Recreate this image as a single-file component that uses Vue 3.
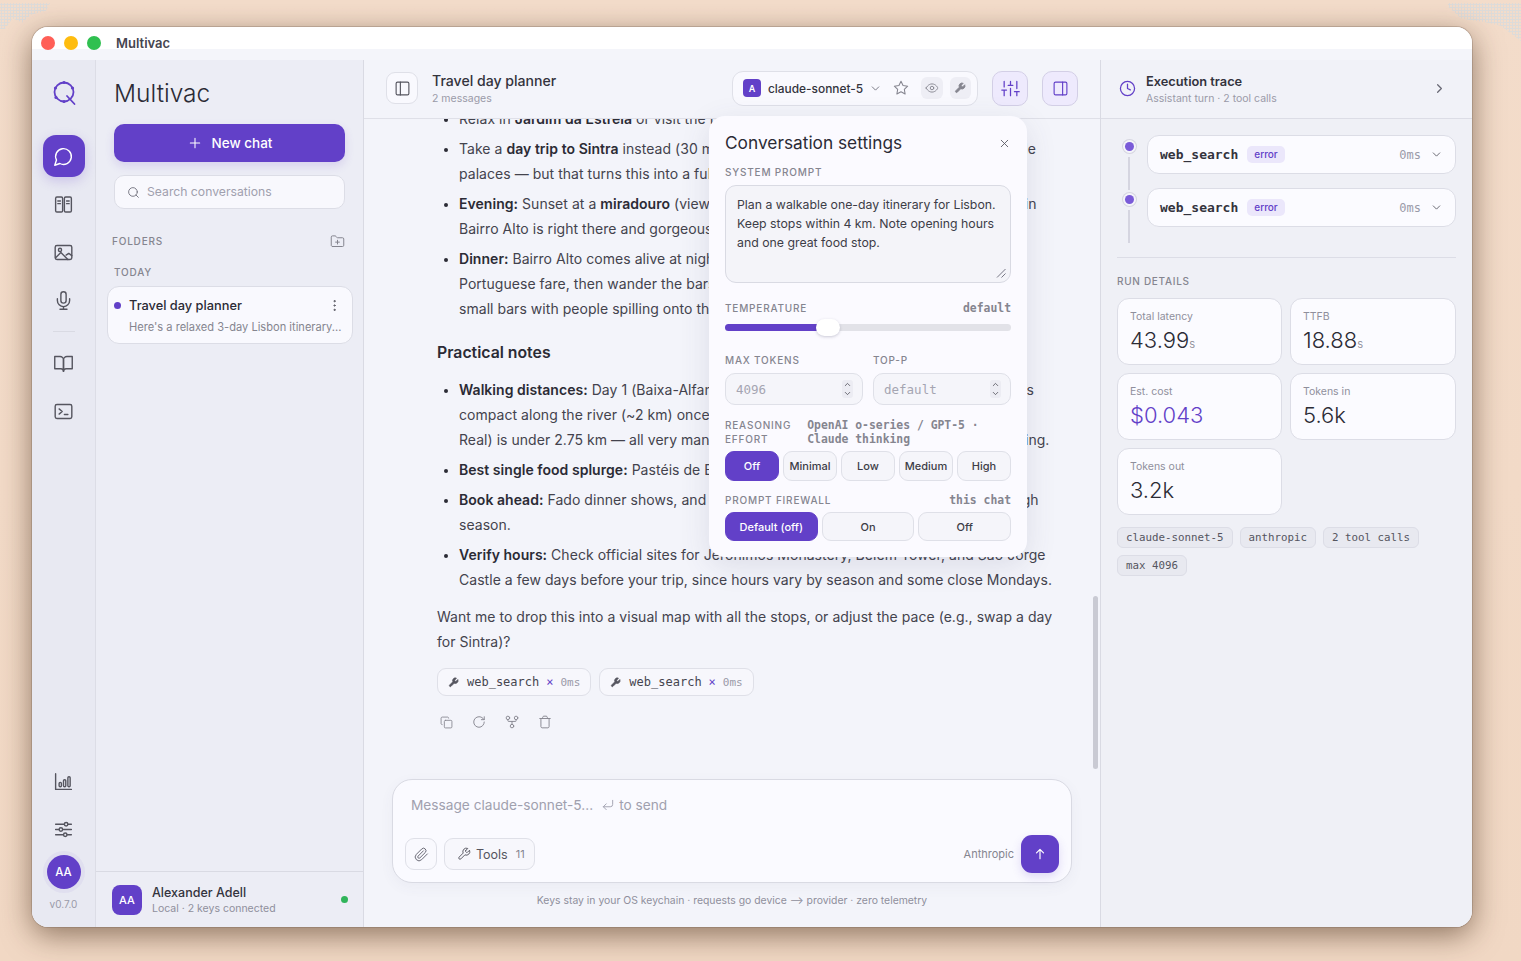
<template>
  <div class="stage">
    <span class="dots dots-left"></span>
    <span class="dots dots-right"></span>

    <div class="window">
      <div class="titlebar">
        <i class="light red"></i><i class="light yellow"></i><i class="light green"></i>
        <span class="app-name">Multivac</span>
      </div>

      <div class="body">
        <!-- icon rail -->
        <nav class="rail">
          <svg class="logo" viewBox="0 0 30 30" width="30" height="30" fill="none" stroke="#6240c8" stroke-width="1.8" stroke-linecap="round">
            <circle cx="15" cy="14" r="9.5" />
            <path d="M18 18l7.5 8" />
            <circle cx="15" cy="4.5" r="1.6" fill="#6240c8" stroke="none" />
            <circle cx="6.5" cy="10" r="1.6" fill="#6240c8" stroke="none" />
            <circle cx="7" cy="19.5" r="1.6" fill="#6240c8" stroke="none" />
            <circle cx="15" cy="23.5" r="1.6" fill="#6240c8" stroke="none" />
            <circle cx="23.5" cy="10" r="1.6" fill="#6240c8" stroke="none" />
          </svg>
          <button class="rail-btn active"><Icon name="chat" :size="21" /></button>
          <button class="rail-btn"><Icon name="books" :size="21" /></button>
          <button class="rail-btn"><Icon name="image" :size="21" /></button>
          <button class="rail-btn"><Icon name="mic" :size="21" /></button>
          <div class="rail-sep"></div>
          <button class="rail-btn"><Icon name="book" :size="21" /></button>
          <button class="rail-btn"><Icon name="terminal" :size="21" /></button>
          <button class="rail-btn push"><Icon name="chart" :size="21" /></button>
          <button class="rail-btn"><Icon name="sliders" :size="21" /></button>
          <div class="rail-avatar">AA</div>
          <div class="version">v0.7.0</div>
        </nav>

        <!-- conversations -->
        <aside class="sidebar">
          <div class="side-top">
            <h1 class="brand">Multivac</h1>
            <button class="new-chat"><Icon name="plus" :size="16" />New chat</button>
            <div class="search"><Icon name="search" :size="13" /><span>Search conversations</span></div>
            <div class="folders"><span>FOLDERS</span><Icon name="folderPlus" :size="15" /></div>
            <div class="today">TODAY</div>
            <div class="conv">
              <div class="conv-title">
                <i class="conv-dot"></i>
                <span>Travel day planner</span>
                <Icon name="more" :size="15" />
              </div>
              <div class="conv-sub">Here's a relaxed 3-day Lisbon itinerary...</div>
            </div>
          </div>
          <div class="user">
            <div class="user-avatar">AA</div>
            <div class="user-text">
              <div class="user-name">Alexander Adell</div>
              <div class="user-sub">Local · 2 keys connected</div>
            </div>
            <i class="online"></i>
          </div>
        </aside>

        <!-- chat -->
        <main class="main">
          <header class="main-head">
            <button class="square"><Icon name="panelLeft" :size="17" /></button>
            <div class="head-text">
              <div class="head-title">Travel day planner</div>
              <div class="head-sub">2 messages</div>
            </div>
            <div class="model">
              <span class="model-badge">A</span>
              <span class="model-name">claude-sonnet-5</span>
              <Icon name="chevronDown" :size="13" />
              <span class="star"><Icon name="star" :size="16" /></span>
              <span class="cap"><Icon name="eye" :size="14" /></span>
              <span class="cap"><Icon name="wrenchFill" :size="12" /></span>
            </div>
            <button class="tint"><Icon name="tune" :size="19" /></button>
            <button class="tint"><Icon name="panelRight" :size="17" /></button>
          </header>

          <div class="thread">
            <div class="prose">
              <ul>
                <li>Relax in <b>Jardim da Estrela</b> or visit the Basilica nearby for a slow afternoon.</li>
                <li>Take a <b>day trip to Sintra</b> instead (30 min by train from Rossio) to see those old fairytale<br />palaces — but that turns this into a full day.</li>
                <li><b>Evening:</b> Sunset at a <b>miradouro</b> (viewpoint) such as Santa Catarina or São Pedro, up in<br />Bairro Alto is right there and gorgeous at golden hour.</li>
                <li><b>Dinner:</b> Bairro Alto comes alive at night. Try a traditional tasca for a simple<br />Portuguese fare, then wander the bars of Rua da Atalaia, a narrow lane that's lively<br />small bars with people spilling onto the street.</li>
              </ul>
              <h2>Practical notes</h2>
              <ul>
                <li><b>Walking distances:</b> Day 1 (Baixa-Alfama-Graça) is hilly with lots of stairs and/or slopes<br />compact along the river (~2 km) once you arrive, and Day 3 (Chiado-Bairro<br />Real) is under 2.75 km — all very manageable with comfortable shoes for gentle walking.</li>
                <li><b>Best single food splurge:</b> Pastéis de Belém, warm from the oven.</li>
                <li><b>Book ahead:</b> Fado dinner shows, and Jerónimos tickets can sell out quickly during high<br />season.</li>
                <li><b>Verify hours:</b> Check official sites for Jerónimos Monastery, Belém Tower, and São Jorge<br />Castle a few days before your trip, since hours vary by season and some close Mondays.</li>
              </ul>
              <p>Want me to drop this into a visual map with all the stops, or adjust the pace (e.g., swap a day<br />for Sintra)?</p>
              <div class="tool-chips">
                <span class="tool-chip" v-for="n in 2" :key="n">
                  <Icon name="wrenchFill" :size="11" />
                  <span class="tool-name">web_search</span>
                  <span class="tool-x">×</span>
                  <span class="tool-ms">0ms</span>
                </span>
              </div>
              <div class="msg-actions">
                <Icon name="copy" :size="13" />
                <Icon name="refresh" :size="14" />
                <Icon name="fork" :size="14" />
                <Icon name="trash" :size="14" />
              </div>
            </div>
            <div class="scrollbar"></div>
          </div>

          <div class="composer">
            <div class="composer-input">Message claude-sonnet-5...<span class="enter"><Icon name="enter" :size="14" /></span>to send</div>
            <div class="composer-row">
              <button class="square small"><Icon name="clip" :size="15" /></button>
              <button class="tools"><Icon name="wrench" :size="14" />Tools <em>11</em></button>
              <span class="provider">Anthropic</span>
              <button class="send"><Icon name="arrowUp" :size="14" :sw="2" /></button>
            </div>
          </div>
          <div class="foot">Keys stay in your OS keychain · requests go device —&gt; provider · zero telemetry</div>

          <!-- settings popover -->
          <section class="popover">
            <div class="pop-head">
              <h3>Conversation settings</h3>
              <Icon name="x" :size="13" />
            </div>
            <label class="lbl">SYSTEM PROMPT</label>
            <div class="prompt">
              Plan a walkable one-day itinerary for Lisbon.<br />Keep stops within 4 km. Note opening hours<br />and one great food stop.
              <svg class="grip" viewBox="0 0 10 10" width="10" height="10" stroke="#777784" fill="none"><path d="M1 9.5L9.5 1M5.5 9.5L9.5 5.5" /></svg>
            </div>
            <div class="lbl-row temp"><span class="lbl">TEMPERATURE</span><span class="mono-note">default</span></div>
            <div class="slider"><div class="fill" :style="{ width: temperature * 100 + '%' }"></div><div class="thumb" :style="{ left: temperature * 100 + '%' }"></div></div>
            <div class="two">
              <div v-for="f in numberFields" :key="f.label">
                <label class="lbl">{{ f.label }}</label>
                <div class="num">
                  <span>{{ f.value }}</span>
                  <span class="stepper"><Icon name="chevronUp" :size="9" :sw="2" /><Icon name="chevronDown" :size="9" :sw="2" /></span>
                </div>
              </div>
            </div>
            <div class="reason">
              <span class="lbl">REASONING<br />EFFORT</span>
              <span class="mono-note">OpenAI o-series / GPT-5 ·<br />Claude thinking</span>
            </div>
            <div class="seg five">
              <button v-for="(o, i) in efforts" :key="o" :class="{ on: i === 0 }">{{ o }}</button>
            </div>
            <div class="lbl-row fw"><span class="lbl">PROMPT FIREWALL</span><span class="mono-note">this chat</span></div>
            <div class="seg three">
              <button v-for="(o, i) in firewall" :key="o" :class="{ on: i === 0 }">{{ o }}</button>
            </div>
          </section>
        </main>

        <!-- trace -->
        <aside class="trace">
          <header class="trace-head">
            <span class="clock"><Icon name="clock" :size="17" :sw="1.8" /></span>
            <div class="trace-text">
              <div class="trace-title">Execution trace</div>
              <div class="trace-sub">Assistant turn · 2 tool calls</div>
            </div>
            <span class="chev"><Icon name="chevronRight" :size="15" :sw="2" /></span>
          </header>
          <div class="trace-body">
            <div class="step" v-for="n in 2" :key="n">
              <div class="step-mark"><i class="step-dot"></i><i class="step-line"></i></div>
              <div class="step-card">
                <span class="step-name">web_search</span>
                <span class="step-badge">error</span>
                <span class="step-ms">0ms</span>
                <Icon name="chevronDown" :size="13" />
              </div>
            </div>
            <div class="trace-rule"></div>
            <div class="run-label">RUN DETAILS</div>
            <div class="stats">
              <div class="stat" v-for="s in stats" :key="s.label">
                <div class="stat-label">{{ s.label }}</div>
                <div class="stat-value" :class="{ accent: s.accent }">{{ s.value }}<small v-if="s.unit">{{ s.unit }}</small></div>
              </div>
            </div>
            <div class="tags">
              <span class="tag" v-for="t in tags" :key="t">{{ t }}</span>
            </div>
          </div>
        </aside>
      </div>
    </div>
  </div>
</template>

<script setup>
import { h } from 'vue'

const icons = {
  chat: '<path d="M7.9 20A9 9 0 1 0 4 16.1L2 22Z"/>',
  books: '<rect x="3" y="3.5" width="8" height="17" rx="1.5"/><rect x="13" y="3.5" width="8" height="17" rx="1.5"/><path d="M5.5 8h3M5.5 11h3M15.5 8h3M15.5 11h3"/>',
  image: '<rect x="2.5" y="4" width="19" height="16" rx="2"/><circle cx="8" cy="9" r="1.8"/><path d="M3 18l6-6 8 8M15 15l3-2 3.5 2.5"/>',
  mic: '<path d="M12 2a3 3 0 0 0-3 3v7a3 3 0 0 0 6 0V5a3 3 0 0 0-3-3Z"/><path d="M19 10v2a7 7 0 0 1-14 0v-2"/><path d="M12 19v3M8 22h8"/>',
  book: '<path d="M2 4h6a4 4 0 0 1 4 4v13a3 3 0 0 0-3-3H2z"/><path d="M22 4h-6a4 4 0 0 0-4 4v13a3 3 0 0 1 3-3h7z"/>',
  terminal: '<rect x="2.5" y="4" width="19" height="16" rx="2"/><path d="M7 9l3.5 3L7 15M13 15.5h4"/>',
  chart: '<path d="M3 3v18h18"/><rect x="7" y="13" width="2.6" height="5" rx="1.2"/><rect x="12" y="10" width="2.6" height="8" rx="1.2"/><rect x="17" y="6.5" width="2.6" height="11.5" rx="1.2"/>',
  sliders: '<path d="M3 6h10M17 6h4M3 12h4M11 12h10M3 18h9M16 18h5"/><circle cx="15" cy="6" r="2"/><circle cx="9" cy="12" r="2"/><circle cx="14" cy="18" r="2"/>',
  plus: '<path d="M12 5v14M5 12h14"/>',
  search: '<circle cx="11" cy="11" r="8"/><path d="m21 21-4.3-4.3"/>',
  folderPlus: '<path d="M4 20h16a2 2 0 0 0 2-2V8a2 2 0 0 0-2-2h-7.93a2 2 0 0 1-1.66-.9l-.82-1.2A2 2 0 0 0 7.93 3H4a2 2 0 0 0-2 2v13c0 1.1.9 2 2 2Z"/><path d="M12 10v6M9 13h6"/>',
  more: '<circle cx="12" cy="5" r="1"/><circle cx="12" cy="12" r="1"/><circle cx="12" cy="19" r="1"/>',
  panelLeft: '<rect x="3" y="3" width="18" height="18" rx="2"/><path d="M9 3v18"/>',
  panelRight: '<rect x="3" y="3" width="18" height="18" rx="2"/><path d="M15 3v18"/>',
  chevronDown: '<path d="m6 9 6 6 6-6"/>',
  chevronUp: '<path d="m6 15 6-6 6 6"/>',
  chevronRight: '<path d="m9 6 6 6-6 6"/>',
  star: '<polygon points="12 2 15.09 8.26 22 9.27 17 14.14 18.18 21.02 12 17.77 5.82 21.02 7 14.14 2 9.27 8.91 8.26 12 2"/>',
  eye: '<path d="M2 12s3-7 10-7 10 7 10 7-3 7-10 7-10-7-10-7Z"/><circle cx="12" cy="12" r="3"/>',
  wrench: '<path d="M14.7 6.3a1 1 0 0 0 0 1.4l1.6 1.6a1 1 0 0 0 1.4 0l3.77-3.77a6 6 0 0 1-7.94 7.94l-6.91 6.91a2.12 2.12 0 0 1-3-3l6.91-6.91a6 6 0 0 1 7.94-7.94l-3.76 3.76z"/>',
  wrenchFill: '<path fill="currentColor" d="M14.7 6.3a1 1 0 0 0 0 1.4l1.6 1.6a1 1 0 0 0 1.4 0l3.77-3.77a6 6 0 0 1-7.94 7.94l-6.91 6.91a2.12 2.12 0 0 1-3-3l6.91-6.91a6 6 0 0 1 7.94-7.94l-3.76 3.76z"/>',
  tune: '<path d="M4 21v-7M4 10V3M12 21v-9M12 8V3M20 21v-5M20 12V3M1 14h6M9 8h6M17 16h6"/>',
  copy: '<rect x="8" y="8" width="14" height="14" rx="2"/><path d="M4 16c-1.1 0-2-.9-2-2V4c0-1.1.9-2 2-2h10c1.1 0 2 .9 2 2"/>',
  refresh: '<path d="M21 12a9 9 0 1 1-9-9c2.52 0 4.93 1 6.74 2.74L21 8"/><path d="M21 3v5h-5"/>',
  fork: '<circle cx="12" cy="19" r="3"/><circle cx="5" cy="5" r="3"/><circle cx="19" cy="5" r="3"/><path d="M19 8v2c0 .6-.4 1-1 1H6c-.6 0-1-.4-1-1V8M12 11v5"/>',
  trash: '<path d="M3 6h18M19 6v14c0 1-1 2-2 2H7c-1 0-2-1-2-2V6M8 6V4c0-1 1-2 2-2h4c1 0 2 1 2 2v2"/>',
  enter: '<polyline points="9 10 4 15 9 20"/><path d="M20 4v7a4 4 0 0 1-4 4H4"/>',
  clip: '<path d="m21.44 11.05-9.19 9.19a6 6 0 0 1-8.49-8.49l8.57-8.57A4 4 0 1 1 18 8.84l-8.59 8.57a2 2 0 0 1-2.83-2.83l8.49-8.48"/>',
  arrowUp: '<path d="M12 20V4M6 10l6-6 6 6"/>',
  x: '<path d="M18 6 6 18M6 6l12 12"/>',
  clock: '<circle cx="12" cy="12" r="10"/><path d="M12 6v6l4 2"/>'
}

// small inline svg helper, the colour comes from the parent
const Icon = (props) => h('svg', {
  viewBox: '0 0 24 24',
  width: props.size,
  height: props.size,
  fill: 'none',
  stroke: 'currentColor',
  'stroke-width': props.sw || 1.6,
  'stroke-linecap': 'round',
  'stroke-linejoin': 'round',
  style: 'flex:none;display:block',
  innerHTML: icons[props.name]
})
Icon.props = ['name', 'size', 'sw']

const temperature = 0.36

const numberFields = [
  { label: 'MAX TOKENS', value: '4096' },
  { label: 'TOP-P', value: 'default' }
]
const efforts = ['Off', 'Minimal', 'Low', 'Medium', 'High']
const firewall = ['Default (off)', 'On', 'Off']

const stats = [
  { label: 'Total latency', value: '43.99', unit: 's' },
  { label: 'TTFB', value: '18.88', unit: 's' },
  { label: 'Est. cost', value: '$0.043', accent: true },
  { label: 'Tokens in', value: '5.6k' },
  { label: 'Tokens out', value: '3.2k' }
]
const tags = ['claude-sonnet-5', 'anthropic', '2 tool calls', 'max 4096']
</script>

<style>
html, body {
  margin: 0;
  background: #f2d9c6;
}
</style>

<style scoped>
* { box-sizing: border-box; }
button { font: inherit; border: none; padding: 0; background: none; color: inherit; }
h1, h2, h3, p, ul { margin: 0; padding: 0; font-weight: inherit; }

.stage {
  position: relative;
  width: 1521px;
  height: 961px;
  overflow: hidden;
  padding: 27px 49px 34px 32px;
  background: linear-gradient(180deg, #f3dcca 0%, #f1d8c4 100%);
  font-family: Inter, "Liberation Sans", sans-serif;
  color: #2b2b35;
}
.dots {
  position: absolute;
  top: 3px;
  background-image: radial-gradient(circle, #dddbd9 1px, transparent 1.1px);
  background-size: 3px 3px;
}
.dots-left {
  left: 0;
  width: 50px;
  height: 26px;
  clip-path: polygon(0 0, 100% 0, 92% 30%, 62% 45%, 45% 75%, 25% 60%, 10% 100%, 0 100%);
}
.dots-right {
  right: 0;
  width: 73px;
  height: 38px;
  clip-path: polygon(0 0, 100% 0, 100% 100%, 72% 60%, 50% 50%, 30% 45%, 18% 40%, 0 10%);
}

.window {
  position: relative;
  z-index: 1;
  display: flex;
  flex-direction: column;
  height: 100%;
  border-radius: 16px;
  overflow: hidden;
  background: #f3f4fa;
  box-shadow: 0 0 0 1px rgba(120, 100, 85, .3);
}
.stage::after {
  content: "";
  position: absolute;
  left: 32px;
  top: 27px;
  width: 1440px;
  height: 900px;
  border-radius: 16px;
  box-shadow: 0 8px 30px rgba(60, 35, 15, .55);
  pointer-events: none;
}

.titlebar {
  display: flex;
  align-items: center;
  flex: none;
  height: 33px;
  padding: 0 0 8px 9px;
  background: linear-gradient(#fff 0, #fff 22px, #f4f5fa 22px);
}
.light { width: 14px; height: 14px; border-radius: 50%; margin-right: 9px; margin-top: 6px; }
.red { background: #ff5f57; }
.yellow { background: #febc0f; }
.green { background: #2fc050; }
.app-name { margin-left: 6px; margin-top: 6px; font-size: 13px; font-weight: 600; color: #45454f; }

.body { flex: 1; display: flex; min-height: 0; }

/* rail */
.rail {
  flex: none;
  width: 64px;
  display: flex;
  flex-direction: column;
  align-items: center;
  padding: 18px 0 16px;
  background: #e8e9f2;
  border-right: 1px solid #dcdde6;
  color: #55555f;
}
.logo { margin-bottom: 27px; flex: none; }
.rail-btn {
  display: flex;
  align-items: center;
  justify-content: center;
  width: 42px;
  height: 42px;
  margin-bottom: 6px;
  border-radius: 13px;
  color: #55555f;
}
.rail-btn.active {
  background: #6240c8;
  color: #fff;
  box-shadow: 0 4px 12px rgba(98, 64, 200, .22);
}
.rail-sep { width: 22px; height: 1px; margin: 4px 0 10px; background: #d9dae3; }
.push { margin-top: auto; }
.rail-avatar {
  display: flex;
  align-items: center;
  justify-content: center;
  width: 34px;
  height: 34px;
  margin-top: -1px;
  border-radius: 50%;
  background: #6240c8;
  color: #fff;
  font-size: 11.5px;
  font-weight: 500;
  box-shadow: 0 0 0 4px rgba(98, 64, 200, .06);
}
.version { margin-top: 8px; font-size: 10px; line-height: 14px; color: #9a9aa8; }

/* sidebar */
.sidebar {
  flex: none;
  width: 268px;
  display: flex;
  flex-direction: column;
  background: #ecedf5;
  border-right: 1px solid #d9dae3;
}
.side-top { flex: 1; padding: 17px 18px 0; }
.brand { font-size: 24.5px; line-height: 32px; color: #2b2b35; font-weight: 300; }
.new-chat {
  display: flex;
  align-items: center;
  justify-content: center;
  gap: 9px;
  width: 231px;
  height: 38px;
  margin-top: 15px;
  border-radius: 10px;
  background: #6240c8;
  color: #fff;
  font-size: 13.5px;
  font-weight: 500;
  box-shadow: 0 4px 10px rgba(98, 64, 200, .16);
}
.search {
  display: flex;
  align-items: center;
  gap: 7px;
  width: 231px;
  height: 34px;
  margin-top: 13px;
  padding-left: 12px;
  border: 1px solid #dcdde6;
  border-radius: 10px;
  background: #f8f8fd;
  font-size: 12.2px;
  color: #a0a0ae;
}
.search span { margin-top: -1px; }
.search svg { color: #6a6a76; }
.folders {
  display: flex;
  justify-content: space-between;
  align-items: center;
  width: 233px;
  margin: 24px 0 0 -2px;
  font-size: 10px;
  letter-spacing: .8px;
  font-weight: 500;
  line-height: 16px;
  color: #85858f;
}
.today { margin-top: 15px; font-size: 10px; letter-spacing: .8px; font-weight: 500; line-height: 16px; color: #85858f; }
.conv {
  width: 246px;
  height: 58px;
  margin: 6px 0 0 -7px;
  padding: 10px 12px 0 6px;
  border: 1px solid #dcdde6;
  border-radius: 12px;
  background: #f9f9fe;
}
.conv-title { display: flex; align-items: center; font-size: 12.8px; font-weight: 500; line-height: 17px; color: #2b2b35; }
.conv-title span { flex: 1; }
.conv-title svg { color: #55555f; margin-right: -2px; }
.conv-dot { width: 7px; height: 7px; border-radius: 50%; margin-right: 8px; background: #6240c8; }
.conv-sub { margin: 6px 0 0 15px; font-size: 11.1px; line-height: 15px; color: #85858f; white-space: nowrap; }

.user {
  display: flex;
  align-items: center;
  height: 56px;
  padding: 0 15px 0 16px;
  border-top: 1px solid #d9dae3;
}
.user-avatar {
  display: flex;
  align-items: center;
  justify-content: center;
  width: 30px;
  height: 30px;
  border-radius: 8px;
  background: #6240c8;
  color: #fff;
  font-size: 11px;
  font-weight: 500;
}
.user-text { flex: 1; margin-left: 10px; padding-top: 2px; }
.user-name { font-size: 12.5px; font-weight: 500; line-height: 16px; color: #33333d; }
.user-sub { font-size: 10.5px; line-height: 15px; color: #8f8f9c; }
.online { width: 7px; height: 7px; border-radius: 50%; background: #30b45a; }

/* main */
.main {
  position: relative;
  flex: 1;
  min-width: 0;
  display: flex;
  flex-direction: column;
  background: #f3f4fa;
}
.main-head {
  flex: none;
  display: flex;
  align-items: center;
  height: 59px;
  padding: 0 22px 2px 22px;
  border-bottom: 1px solid #dfe0e8;
}
.square {
  display: flex;
  align-items: center;
  justify-content: center;
  width: 32px;
  height: 32px;
  border: 1px solid #dfe0e8;
  border-radius: 9px;
  background: #f9f9fe;
  color: #55555f;
}
.head-text { flex: 1; margin-left: 14px; padding-top: 1px; }
.head-title { font-size: 14.1px; font-weight: 500; line-height: 20px; color: #33333d; }
.head-sub { font-size: 10.5px; line-height: 15px; color: #9a9aa8; }
.model {
  display: flex;
  align-items: center;
  width: 246px;
  height: 35px;
  padding: 0 6px 0 10px;
  border: 1px solid #dfe0e8;
  border-radius: 11px;
  background: #f9f9fe;
  color: #6a6a76;
}
.model-badge {
  display: flex;
  align-items: center;
  justify-content: center;
  flex: none;
  width: 18px;
  height: 18px;
  border-radius: 4px;
  background: #6240c8;
  color: #fff;
  font-size: 9px;
  font-weight: 600;
}
.model-name { margin: 0 6px 0 7px; font-size: 11.9px; font-weight: 500; color: #33333d; white-space: nowrap; }
.star { margin: 0 12px 0 11px; color: #85858f; }
.cap {
  display: flex;
  align-items: center;
  justify-content: center;
  width: 22px;
  height: 22px;
  margin-left: 7px;
  border-radius: 6px;
  background: #eeeef5;
  color: #85858f;
}
.star + .cap { margin-left: 0; }
.tint {
  display: flex;
  align-items: center;
  justify-content: center;
  width: 36px;
  height: 35px;
  margin-left: 14px;
  border: 1px solid #d3cfe6;
  border-radius: 10px;
  background: #eeeafd;
  color: #6240c8;
}

.thread { position: relative; flex: 1; min-height: 0; overflow: hidden; }
.prose {
  margin-top: -13px;
  padding-left: 73px;
  font-size: 14px;
  line-height: 25px;
  letter-spacing: .04px;
  color: #43434d;
  white-space: nowrap;
}
.prose b { font-weight: 600; color: #2b2b35; }
.prose ul { list-style: disc; padding-left: 22px; }
.prose li { margin-bottom: 5px; }
.prose li::marker { font-size: 13px; color: #2b2b35; }
.prose h2 { margin: 20px 0 12px; font-size: 15.8px; line-height: 24px; font-weight: 600; color: #2b2b35; letter-spacing: 0; }
.prose p { margin-top: 12px; }
.tool-chips { display: flex; gap: 8px; margin-top: 14px; }
.tool-chip {
  display: flex;
  align-items: center;
  height: 28px;
  padding: 0 10px 0 10px;
  border: 1px solid #dfe0e8;
  border-radius: 9px;
  background: #f7f7fc;
  color: #55555f;
  font-family: "DejaVu Sans Mono", "Liberation Mono", monospace;
  font-size: 12px;
  letter-spacing: 0;
}
.tool-name { margin-left: 8px; color: #45454f; }
.tool-x { margin: 0 7px; color: #6240c8; }
.tool-ms { color: #9a9aa8; font-size: 11px; }
.msg-actions { display: flex; align-items: center; gap: 19px; margin: 19px 0 0 3px; color: #85858f; }
.scrollbar {
  position: absolute;
  right: 2px;
  top: 477px;
  width: 5px;
  height: 173px;
  border-radius: 3px;
  background: #c9cad3;
}

.composer {
  flex: none;
  width: 680px;
  height: 104px;
  margin: 10px 0 0 28px;
  padding: 15px 12px 12px 12px;
  border: 1px solid #d9dae3;
  border-radius: 20px;
  background: #fafaff;
  box-shadow: 0 4px 14px rgba(80, 80, 120, .05);
}
.composer-input {
  display: flex;
  align-items: center;
  padding-left: 6px;
  font-size: 13.7px;
  line-height: 20px;
  color: #a0a0ae;
}
.enter { margin: 0 4px 0 8px; }
.composer-row { display: flex; align-items: center; margin-top: 20px; }
.square.small { color: #6a6a76; }
.tools {
  display: flex;
  align-items: center;
  gap: 5px;
  height: 32px;
  margin-left: 7px;
  padding: 0 9px 0 12px;
  border: 1px solid #dfe0e8;
  border-radius: 9px;
  background: #f7f7fc;
  font-size: 12.5px;
  color: #55555f;
}
.tools em { margin-left: 3px; font-style: normal; font-size: 11px; color: #85858f; }
.provider { margin-left: auto; font-size: 11px; color: #85858f; }
.send {
  display: flex;
  align-items: center;
  justify-content: center;
  width: 38px;
  height: 38px;
  margin-left: 7px;
  border-radius: 11px;
  background: #6240c8;
  color: #fff;
  box-shadow: 0 4px 10px rgba(98, 64, 200, .18);
}
.foot {
  flex: none;
  height: 44px;
  padding-top: 10px;
  text-align: center;
  font-size: 10.4px;
  line-height: 16px;
  color: #8f8f9c;
}

/* popover */
.popover {
  position: absolute;
  left: 345px;
  top: 56px;
  width: 318px;
  height: 441px;
  padding: 15px 16px 0;
  border-radius: 16px;
  background: #fbfaff;
  box-shadow: 0 8px 30px rgba(70, 70, 110, .13);
}
.pop-head { display: flex; align-items: center; justify-content: space-between; color: #55555f; }
.pop-head h3 { font-size: 17.3px; line-height: 24px; font-weight: 400; color: #2b2b35; white-space: nowrap; }
.lbl { display: block; font-size: 10px; line-height: 14px; letter-spacing: .8px; font-weight: 500; color: #85858f; }
.pop-head + .lbl { margin-top: 10px; }
.prompt {
  position: relative;
  width: 286px;
  height: 98px;
  margin-top: 6px;
  padding: 9px 11px;
  border: 1px solid #d9dae3;
  border-radius: 11px;
  background: #f4f4f9;
  font-size: 12.3px;
  line-height: 19px;
  white-space: nowrap;
  color: #3d3d47;
}
.grip { position: absolute; right: 4px; bottom: 4px; }
.lbl-row { display: flex; justify-content: space-between; align-items: center; }
.lbl-row.temp { margin-top: 18px; }
.mono-note {
  font-family: "DejaVu Sans Mono", "Liberation Mono", monospace;
  font-size: 11.4px;
  line-height: 14px;
  font-weight: 700;
  color: #85858f;
  white-space: nowrap;
}
.slider { position: relative; height: 7px; margin-top: 9px; border-radius: 4px; background: #e2e2e8; }
.fill { height: 100%; border-radius: 4px; background: #6240c8; }
.thumb {
  position: absolute;
  top: -5px;
  width: 24px;
  height: 17px;
  margin-left: -12px;
  border-radius: 9px;
  background: #fff;
  box-shadow: 0 1px 3px rgba(60, 60, 90, .25);
}
.two { display: grid; grid-template-columns: 138px 138px; gap: 10px; margin-top: 22px; }
.num {
  display: flex;
  align-items: center;
  justify-content: space-between;
  height: 32px;
  margin-top: 6px;
  padding: 0 9px 0 10px;
  border: 1px solid #dfe0e8;
  border-radius: 10px;
  background: #f5f5fa;
  font-family: "DejaVu Sans Mono", "Liberation Mono", monospace;
  font-size: 12.5px;
  color: #a5a5b2;
}
.stepper { display: flex; flex-direction: column; color: #45454f; padding: 0 1px; background: #ececf3; border-radius: 3px; }
.reason { display: flex; gap: 16px; margin-top: 13px; }
.seg { display: grid; gap: 4px; margin-top: 5px; }
.seg.five { grid-template-columns: repeat(5, 54px); height: 30px; }
.seg.three { grid-template-columns: repeat(3, 1fr); height: 29px; margin-top: 5px; }
.seg button {
  border: 1px solid #dfe0e8;
  border-radius: 9px;
  background: #f5f5fa;
  font-size: 11px;
  font-weight: 500;
  color: #3d3d47;
}
.seg button.on { background: #6240c8; border-color: #6240c8; color: #fff; }
.lbl-row.fw { margin-top: 12px; }

/* trace */
.trace {
  flex: none;
  width: 372px;
  display: flex;
  flex-direction: column;
  background: #eff0f6;
  border-left: 1px solid #d9dae3;
}
.trace-head {
  flex: none;
  display: flex;
  align-items: center;
  height: 59px;
  padding: 0 25px 2px 18px;
  border-bottom: 1px solid #dcdde6;
  background: #f1f2f8;
}
.clock { color: #6240c8; }
.trace-text { flex: 1; margin-left: 10px; padding-top: 2px; }
.trace-title { font-size: 12.8px; font-weight: 600; line-height: 18px; color: #33333d; }
.trace-sub { font-size: 10.5px; line-height: 15px; color: #9a9aa8; }
.chev { color: #6a6a76; }
.trace-body { padding: 16px 16px 0 16px; }
.step { display: flex; height: 53px; }
.step-mark { position: relative; width: 30px; flex: none; }
.step-dot {
  position: absolute;
  left: 7.5px;
  top: 6.5px;
  width: 9px;
  height: 9px;
  border-radius: 50%;
  background: #7a5bd8;
  box-shadow: 0 0 0 2px #f4f4fa, 0 0 0 3px #d5d5e0;
}
.step-line { position: absolute; left: 11px; top: 22px; width: 2px; height: 33px; background: #d5d5e0; }
.step-card {
  display: flex;
  align-items: center;
  width: 309px;
  height: 39px;
  padding: 0 12px;
  border: 1px solid #dcdde6;
  border-radius: 12px;
  background: #fbfbff;
  color: #55555f;
}
.step-name { font-family: "DejaVu Sans Mono", "Liberation Mono", monospace; font-size: 13px; font-weight: 700; color: #33333d; }
.step-badge {
  margin-left: 9px;
  padding: 0 7px;
  height: 17px;
  line-height: 17px;
  border-radius: 5px;
  background: #ebe7fb;
  color: #6240c8;
  font-size: 10px;
  font-weight: 500;
}
.step-ms { margin: 0 9px 0 auto; font-family: "DejaVu Sans Mono", "Liberation Mono", monospace; font-size: 12px; color: #9a9aa8; }
.trace-rule { height: 1px; margin-top: 16px; background: #dcdde6; }
.run-label { margin-top: 16px; font-size: 10px; letter-spacing: .7px; font-weight: 500; line-height: 14px; color: #85858f; }
.stats { display: grid; grid-template-columns: 165px 166px; gap: 8px; margin-top: 10px; }
.stat {
  height: 67px;
  padding: 11px 12px 0;
  border: 1px solid #dcdde6;
  border-radius: 12px;
  background: #fbfbff;
}
.stat-label { font-size: 10.5px; line-height: 14px; color: #8f8f9c; }
.stat-value { margin-top: 2px; font-size: 22px; line-height: 28px; font-weight: 300; color: #2b2b35; }
.stat-value small { font-size: 11.5px; color: #85858f; }
.stat-value.accent { color: #6240c8; }
.tags { display: flex; flex-wrap: wrap; gap: 7px; width: 320px; margin-top: 12px; }
.tag {
  height: 21px;
  padding: 0 8px;
  border: 1px solid #dcdde6;
  border-radius: 6px;
  background: #e8e9f0;
  font-family: "DejaVu Sans Mono", "Liberation Mono", monospace;
  font-size: 10.8px;
  line-height: 19px;
  color: #55555f;
}
</style>
